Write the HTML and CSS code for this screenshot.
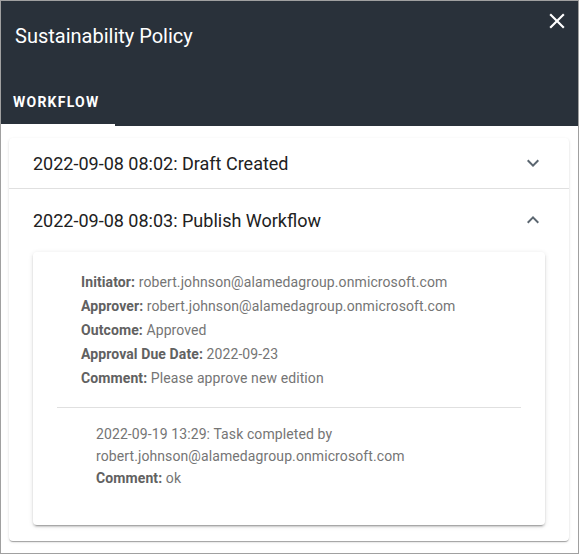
FILE: index.html
```html
<!DOCTYPE html>
<html>
<head>
<meta charset="utf-8">
<link rel="stylesheet" href="styles.css">
</head>
<body>
<div class="dialog">
  <div class="header">
    <div class="title-row">
      <h1 class="title">Sustainability Policy</h1>
      <svg class="close" viewBox="0 0 24 24" width="26" height="26"><path d="M19 6.41L17.59 5 12 10.59 6.41 5 5 6.41 10.59 12 5 17.59 6.41 19 12 13.41 17.59 19 19 17.59 13.41 12z" fill="#fff"/></svg>
    </div>
    <div class="tabs">
      <div class="tab active">WORKFLOW</div>
    </div>
  </div>
  <div class="content">
    <div class="panels">
      <div class="panel">
        <div class="panel-header">
          <span class="panel-title">2022-09-08 08:02: Draft Created</span>
          <svg class="chev" viewBox="0 0 24 24" width="24" height="24"><path d="M16.59 8.59L12 13.17 7.41 8.59 6 10l6 6 6-6z"/></svg>
        </div>
      </div>
      <div class="panel expanded">
        <div class="panel-header tall">
          <span class="panel-title">2022-09-08 08:03: Publish Workflow</span>
          <svg class="chev" viewBox="0 0 24 24" width="24" height="24"><path d="M12 8l-6 6 1.41 1.41L12 10.83l4.59 4.58L18 14z"/></svg>
        </div>
        <div class="panel-body">
          <div class="detail-card">
            <div class="details">
              <div class="line"><b>Initiator:</b> robert.johnson@alamedagroup.onmicrosoft.com</div>
              <div class="line"><b>Approver:</b> robert.johnson@alamedagroup.onmicrosoft.com</div>
              <div class="line"><b>Outcome:</b> Approved</div>
              <div class="line"><b>Approval Due Date:</b> 2022-09-23</div>
              <div class="line"><b>Comment:</b> Please approve new edition</div>
            </div>
            <div class="divider"></div>
            <div class="task">
              <div class="tline">2022-09-19 13:29: Task completed by</div>
              <div class="tline">robert.johnson@alamedagroup.onmicrosoft.com</div>
              <div class="tline"><b>Comment:</b> ok</div>
            </div>
          </div>
        </div>
      </div>
    </div>
  </div>
</div>
</body>
</html>
```
FILE: styles.css
```css
* { box-sizing: border-box; }
html, body { margin: 0; padding: 0; background: #fff; }
body { font-family: Roboto, "Noto Sans", sans-serif; }

.dialog {
  width: 579px;
  height: 554px;
  border: 1px solid #a0a0a0;
  display: flex;
  flex-direction: column;
  background: #fff;
  overflow: hidden;
}

.header {
  background: #29313a;
  height: 125px;
  display: flex;
  flex-direction: column;
  justify-content: space-between;
  flex: none;
}

.title-row {
  display: flex;
  justify-content: space-between;
  align-items: flex-start;
  padding: 7px 8px 0 14px;
}

.title {
  margin: 16px 0 0;
  font-size: 20px;
  line-height: 24px;
  font-weight: 400;
  color: #fff;
}

.close { display: block; }

.tabs { display: flex; }

.tab {
  height: 48px;
  width: 114px;
  padding: 0 12px;
  display: flex;
  align-items: center;
  font-size: 14px;
  font-weight: 700;
  letter-spacing: 1.25px;
  color: #fff;
  border-bottom: 2px solid #fff;
  padding-top: 2px;
}

.content {
  flex: 1;
  padding: 12px 9px 0 8px;
}

.panels {
  background: #fff;
  border-radius: 4px;
  box-shadow: 0 2px 1px -1px rgba(0,0,0,.2), 0 1px 1px 0 rgba(0,0,0,.14), 0 1px 3px 0 rgba(0,0,0,.12);
}

.panel + .panel { border-top: 1px solid #e0e0e0; }

.panel-header {
  height: 50px;
  display: flex;
  align-items: center;
  justify-content: space-between;
  padding: 0 24px;
}
.panel-header.tall { height: 62px; }

.panel-title {
  font-size: 18px;
  color: #212121;
}

.chev { fill: #5b6670; display: block; }

.panel-body { padding: 1px 24px 16px; }

.detail-card {
  border-radius: 4px;
  box-shadow: 0 3px 1px -2px rgba(0,0,0,.2), 0 2px 2px 0 rgba(0,0,0,.14), 0 1px 5px 0 rgba(0,0,0,.12);
  padding: 18px 24px 36px;
  font-size: 14px;
  letter-spacing: 0.1px;
  color: #757575;
}

.details { padding-left: 24px; }
.line { line-height: 24px; }
.line b, .tline b { color: #616161; font-weight: 700; }

.divider {
  height: 1px;
  background: #e0e0e0;
  margin: 17px 0 15px;
}

.task { padding-left: 39px; }
.tline { line-height: 22px; }
```
